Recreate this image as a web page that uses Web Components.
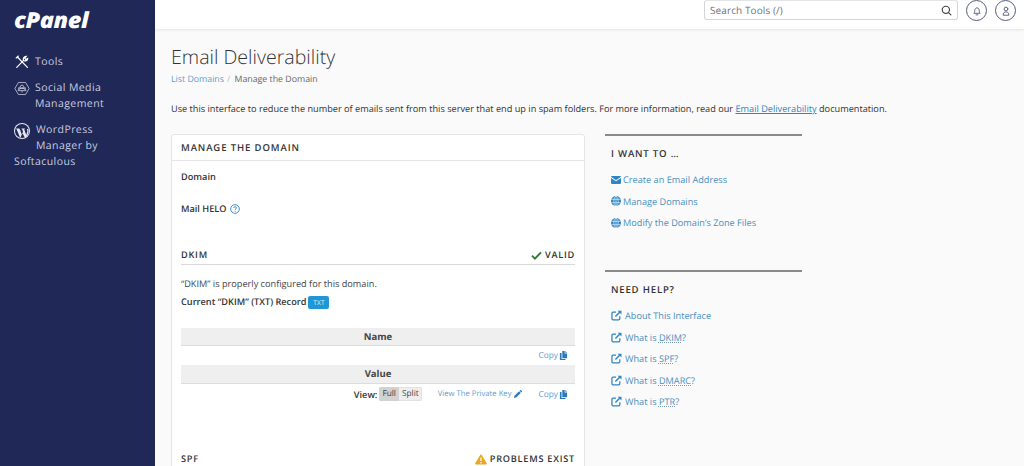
<!DOCTYPE html>
<html lang="en">
<head>
<meta charset="utf-8">
<title>Email Deliverability</title>
<style>
  html, body { margin: 0; height: 466px; overflow: hidden; }
  body { font-family: "Open Sans", "Liberation Sans", sans-serif; color: #333; background: #fafafa; text-rendering: geometricPrecision; }
</style>
</head>
<body>
<cp-app>
  <cp-sidebar slot="side">
    <cp-nav-item icon="tools" label="Tools"></cp-nav-item>
    <cp-nav-item icon="social" label="Social Media Management"></cp-nav-item>
    <cp-nav-item icon="wp" label="WordPress Manager by Softaculous" wrap></cp-nav-item>
  </cp-sidebar>
  <cp-topbar slot="top"></cp-topbar>
  <cp-page>
    <cp-panel title="Manage the Domain">
      <cp-field label="Domain" style="margin-top:-1px"></cp-field>
      <cp-field label="Mail HELO" help></cp-field>
      <cp-section name="DKIM" status="Valid" kind="ok" style="margin-top:23px"></cp-section>
      <cp-dkim></cp-dkim>
      <cp-section name="SPF" status="Problems Exist" kind="warn" style="margin-top:47px"></cp-section>
    </cp-panel>
    <div slot="aside">
      <cp-side-box heading="I Want To …">
        <cp-link icon="mail">Create an Email Address</cp-link>
        <cp-link icon="globe">Manage Domains</cp-link>
        <cp-link icon="globe">Modify the Domain’s Zone Files</cp-link>
      </cp-side-box>
      <cp-side-box heading="Need Help?" style="margin-top:36px">
        <cp-link icon="ext">About This Interface</cp-link>
        <cp-link icon="ext">What is <abbr>DKIM</abbr>?</cp-link>
        <cp-link icon="ext">What is <abbr>SPF</abbr>?</cp-link>
        <cp-link icon="ext">What is <abbr>DMARC</abbr>?</cp-link>
        <cp-link icon="ext">What is <abbr>PTR</abbr>?</cp-link>
      </cp-side-box>
    </div>
  </cp-page>
</cp-app>

<script>
const ICONS = {
  tools: `<svg viewBox="0 0 16 16" width="14" height="14" fill="none" stroke="#fff" stroke-width="1.4" stroke-linecap="round"><path d="M2 14.200 9.800 6.200"/><path d="M9.800 6.200C8.800 4.200 10 1.600 12.800 1.600l-1.700 2 1.200 1.500 2.200-1.200c0 2.600-2.700 3.500-4.700 2.300"/><path d="M3 2.600 14.200 14.200"/><path d="M1.400 3.400 3.800 1.200"/></svg>`,
  social: `<svg viewBox="0 0 18 16" width="17" height="15" fill="none" stroke="#c9cde0" stroke-width=".9"><path d="M5 1.200h8L17 8l-4 6.800H5L1 8z" stroke-linejoin="round"/><circle cx="9" cy="5.800" r="1.700"/><path d="M4.600 10.400c0-1.400 1-2.400 2.400-2.400h4c1.400 0 2.400 1 2.400 2.400z"/><circle cx="6.200" cy="7.800" r="1.100"/><circle cx="11.800" cy="7.800" r="1.100"/><path d="M9 10.400v2"/></svg>`,
  wp: `<svg viewBox="0 0 16 16" width="16" height="16"><circle cx="8" cy="8" r="8" fill="#e6e8f2"/><circle cx="8" cy="8" r="7" fill="#1f2857"/><path d="M2.200 5.600h3.400l-.4.500.7.1 2 5.800 1.100-3.300-.9-2.500-.6-.1V5.600h3.400v.5l-.7.1 2 5.700 1-3c.4-1.500-.1-2.300-.5-3h1.500c.7 2 .3 4-.5 5.600l-2 3.600h-.7L8.300 9.700l-1.600 4.900H6L2.600 6.200l-.4-.1z" fill="#e6e8f2"/></svg>`,
  search: `<svg viewBox="0 0 14 14" width="11" height="11" fill="none" stroke="#444" stroke-width="1.500" stroke-linecap="round"><circle cx="6.200" cy="6.200" r="4.600"/><path d="M9.600 9.600 12.600 12.600"/></svg>`,
  bell: `<svg viewBox="0 0 14 14" width="10" height="10" fill="none" stroke="#555b7c" stroke-width="1.300" stroke-linejoin="round"><path d="M2.600 10.200c.9-.8 1.200-1.600 1.200-3.600 0-2.400 1.400-4 3.200-4s3.200 1.600 3.200 4c0 2 .3 2.800 1.200 3.600z"/><path d="M5.800 12.400h2.400" stroke-linecap="round"/></svg>`,
  user: `<svg viewBox="0 0 14 14" width="10" height="10" fill="none" stroke="#555b7c" stroke-width="1.300" stroke-linecap="round"><circle cx="7" cy="4.200" r="2.600"/><path d="M3 12.400c0-2.600 1.500-4.200 4-4.200s4 1.600 4 4.200z"/></svg>`,
  help: `<svg viewBox="0 0 12 12" width="10" height="10"><circle cx="6" cy="6" r="5.200" fill="none" stroke="#2f86c4" stroke-width="1.100"/><path d="M4.400 4.700c.1-1 .8-1.500 1.700-1.500s1.600.6 1.600 1.400c0 1.200-1.600 1.200-1.600 2.400" fill="none" stroke="#2f86c4" stroke-width="1.100"/><circle cx="6.100" cy="8.700" r=".7" fill="#2f86c4"/></svg>`,
  check: `<svg viewBox="0 0 12 10" width="11" height="9"><path d="M1 5.200 4.200 8.400 11 1.600" fill="none" stroke="#2e7d32" stroke-width="2.100"/></svg>`,
  warn: `<svg viewBox="0 0 14 12" width="12" height="11"><path d="M7 .3c.4 0 .7.2.9.5l5.800 9.600c.4.7-.1 1.400-.9 1.400H1.200c-.8 0-1.300-.7-.9-1.400L6.100.8C6.300.5 6.600.3 7 .3z" fill="#e8a91f"/><path d="M7 3.800v4" stroke="#fff" stroke-width="1.500"/><circle cx="7" cy="9.700" r=".9" fill="#fff"/></svg>`,
  copy: `<svg viewBox="0 0 12 12" width="9" height="9" fill="#2f79b9"><path d="M4.400 0h3.200v3.200h3.200V9.600H4.400z"/><path d="M8.400 0l2.400 2.400H8.400z"/><path d="M1.200 2.600h2.200v8h5.200V12H1.200z"/></svg>`,
  pencil: `<svg viewBox="0 0 12 12" width="8" height="8" fill="#2f79b9"><path d="M0 12l.7-3.300L7.600 1.800l2.600 2.600-6.900 6.900z"/><path d="M8.400 1l.7-.7c.4-.4 1-.4 1.400 0l1.200 1.200c.4.400.4 1 0 1.400l-.7.7z"/></svg>`,
  mail: `<svg viewBox="0 0 14 11" width="10" height="8" fill="#2f86c4"><path d="M1.200 0h11.600c.7 0 1.200.5 1.200 1.100L7 5.800 0 1.100C0 .5.500 0 1.200 0z"/><path d="M0 2.600l7 4.600 7-4.600v7.200c0 .7-.5 1.200-1.200 1.200H1.200C.5 11 0 10.500 0 9.800z"/></svg>`,
  globe: `<svg viewBox="0 0 12 12" width="10" height="10"><circle cx="6" cy="6" r="6" fill="#2f86c4"/><g fill="none" stroke="#fafafa" stroke-width=".7"><ellipse cx="6" cy="6" rx="2.600" ry="5.800"/><path d="M.4 4h11.200M.4 8h11.200M6 0v12"/></g></svg>`,
  ext: `<svg viewBox="0 0 14 14" width="11" height="11" fill="none" stroke="#2f86c4" stroke-width="1.600"><path d="M6.400 2.600H2.600c-.8 0-1.400.6-1.400 1.400v7.200c0 .8.6 1.400 1.400 1.400h7.200c.8 0 1.400-.6 1.400-1.400V8"/><path d="M5.600 8.400 12 2" stroke-width="1.800"/><path d="M8.400 .8h5v5z" fill="#2f86c4" stroke="none"/></svg>`
};

class CpApp extends HTMLElement {
  constructor() {
    super();
    this.attachShadow({ mode: "open" });
    this.shadowRoot.innerHTML = `
      <style>
        :host { display: grid; grid-template-columns: 155px 1fr; grid-template-rows: 29px 1fr; height: 466px; }
        .side { grid-row: 1 / 3; }
      </style>
      <div class="side"><slot name="side"></slot></div>
      <slot name="top"></slot>
      <slot></slot>
    `;
  }
}
customElements.define("cp-app", CpApp);

class CpSidebar extends HTMLElement {
  constructor() {
    super();
    this.attachShadow({ mode: "open" });
    this.shadowRoot.innerHTML = `
      <style>
        :host { display: block; height: 466px; background: #1f2857; color: #c9cde0; box-sizing: border-box; padding-top: 9px; }
        .logo { display: block; width: max-content; margin-left: 14px; height: 24px; font: italic 800 22px/23px "Open Sans", sans-serif; color: #fff; letter-spacing: -.4px; transform: scaleX(1.070); transform-origin: left center; }
        nav { display: flex; flex-direction: column; gap: 10px; margin-top: 21px; }
      </style>
      <span class="logo">cPanel</span>
      <nav><slot></slot></nav>
    `;
  }
}
customElements.define("cp-sidebar", CpSidebar);

class CpNavItem extends HTMLElement {
  constructor() {
    super();
    this.attachShadow({ mode: "open" });
  }

  connectedCallback() {
    const label = this.getAttribute("label");
    // the WordPress entry breaks under its icon, like the real menu does
    const text = this.hasAttribute("wrap")
      ? `WordPress<br>Manager by<br>Softaculous`
      : `<span>${label.replace("Media ", "Media<br>")}</span>`;
    this.shadowRoot.innerHTML = `
      <style>
        :host { display: block; padding-left: 14px; font-size: 10.500px; line-height: 16px; letter-spacing: .42px; color: #c9cde0; }
        .row { display: flex; gap: 5px; }
        .ic { flex: none; width: 16px; display: flex; justify-content: center; padding-top: 1px; }
        .wrap .ic { float: left; margin-right: 6px; height: 30px; }
      </style>
      <div class="${this.hasAttribute("wrap") ? "wrap" : "row"}">
        <span class="ic">${ICONS[this.getAttribute("icon")]}</span>
        ${text}
      </div>
    `;
  }
}
customElements.define("cp-nav-item", CpNavItem);

class CpTopbar extends HTMLElement {
  constructor() {
    super();
    this.attachShadow({ mode: "open" });
    this.shadowRoot.innerHTML = `
      <style>
        :host { display: flex; align-items: flex-start; justify-content: flex-end; gap: 8px; height: 29px; box-sizing: border-box; background: #fff; box-shadow: 0 1px 3px rgba(0,0,0,.09); padding-right: 8px; position: relative; z-index: 1; }
        .search { width: 254px; height: 20px; box-sizing: border-box; border: 1px solid #d3d5d9; border-top-color: #e4e4e6; border-radius: 3px; display: flex; align-items: center; justify-content: space-between; padding: 0 5px; font-size: 10px; color: #70747c; letter-spacing: .1px; }
        .round { width: 21px; height: 21px; box-sizing: border-box; border: 1px solid #555b7c; border-radius: 50%; display: flex; align-items: center; justify-content: center; }
      </style>
      <div class="search"><span>Search Tools (/)</span>${ICONS.search}</div>
      <div class="round">${ICONS.bell}</div>
      <div class="round">${ICONS.user}</div>
    `;
  }
}
customElements.define("cp-topbar", CpTopbar);

class CpPage extends HTMLElement {
  constructor() {
    super();
    this.attachShadow({ mode: "open" });
    this.shadowRoot.innerHTML = `
      <style>
        :host { display: block; padding: 14px 16px 0; font-size: 9.180px; overflow: hidden; }
        h1 { margin: 0; font-size: 19.600px; font-weight: 300; line-height: 28px; color: #333; }
        .crumbs { margin-top: 1px; font-size: 8.800px; line-height: 14px; color: #666; }
        .crumbs a { color: #5a9fcf; }
        .crumbs i { font-style: normal; color: #bbb; margin: 0 2px 0 3px; }
        p { margin: 16px 0 0; line-height: 14px; color: #333; white-space: nowrap; }
        p a { color: #2f86c4; text-decoration: underline; }
        .cols { display: grid; grid-template-columns: 414px 197px; gap: 20px; margin-top: 18px; }
      </style>
      <h1>Email Deliverability</h1>
      <div class="crumbs"><a>List Domains</a><i>/</i> Manage the Domain</div>
      <p>Use this interface to reduce the number of emails sent from this server that end up in spam folders. For more information, read our <a>Email Deliverability</a> documentation.</p>
      <div class="cols">
        <div><slot></slot></div>
        <slot name="aside"></slot>
      </div>
    `;
  }
}
customElements.define("cp-page", CpPage);

class CpPanel extends HTMLElement {
  constructor() {
    super();
    this.attachShadow({ mode: "open" });
  }

  connectedCallback() {
    this.shadowRoot.innerHTML = `
      <style>
        :host { display: block; background: #fff; border: 1px solid #e6e6e6; border-radius: 3px; box-sizing: border-box; height: 400px; }
        header { height: 26px; box-sizing: border-box; padding: 0 9px; border-bottom: 1px solid #e6e6e6; font-size: 9.500px; font-weight: 600; letter-spacing: .9px; line-height: 25px; text-transform: uppercase; color: #333; }
        .body { padding: 0 9px; }
      </style>
      <header>${this.getAttribute("title")}</header>
      <div class="body"><slot></slot></div>
    `;
  }
}
customElements.define("cp-panel", CpPanel);

class CpField extends HTMLElement {
  constructor() {
    super();
    this.attachShadow({ mode: "open" });
  }

  connectedCallback() {
    const help = this.hasAttribute("help") ? ICONS.help : "";
    this.shadowRoot.innerHTML = `
      <style>
        :host { display: flex; align-items: center; gap: 3px; height: 32px; padding-top: 1px; box-sizing: border-box; font-size: 9.200px; font-weight: 600; color: #333; }
        svg { display: block; }
      </style>
      <span>${this.getAttribute("label")}</span>${help}
    `;
  }
}
customElements.define("cp-field", CpField);

class CpSection extends HTMLElement {
  constructor() {
    super();
    this.attachShadow({ mode: "open" });
  }

  connectedCallback() {
    const kind = this.getAttribute("kind");
    this.shadowRoot.innerHTML = `
      <style>
        :host { display: flex; justify-content: space-between; align-items: flex-start; height: 18px; box-sizing: border-box; border-bottom: 1px solid #d9d9d9; font-size: 9.200px; font-weight: 600; letter-spacing: .75px; line-height: 16px; text-transform: uppercase; color: #333; }
        .st { display: flex; align-items: center; gap: 3px; }
        svg { display: block; }
      </style>
      <span>${this.getAttribute("name")}</span>
      <span class="st">${ICONS[kind === "ok" ? "check" : "warn"]}${this.getAttribute("status")}</span>
    `;
  }
}
customElements.define("cp-section", CpSection);

class CpDkim extends HTMLElement {
  constructor() {
    super();
    this.attachShadow({ mode: "open" });
    this.shadowRoot.innerHTML = `
      <style>
        :host { display: block; font-size: 9.180px; color: #333; }
        .ok { margin-top: 12px; line-height: 14px; color: #444; }
        .rec { margin-top: 4px; line-height: 14px; font-weight: 600; display: flex; align-items: center; gap: 2px; }
        .tag { background: #1f97d4; color: #dff1fb; font-size: 6.500px; font-weight: 400; width: 21px; height: 13px; line-height: 13px; text-align: center; border-radius: 2px; letter-spacing: .2px; }
        .th { height: 18px; background: #efefef; border-bottom: 1px solid #ddd; box-sizing: border-box; text-align: center; font-weight: 700; line-height: 17px; font-size: 9.500px; color: #444; }
        .th.value { height: 19px; line-height: 18px; }
        .name { margin-top: 19px; }
        .line { display: flex; justify-content: flex-end; align-items: center; height: 19px; padding-right: 7px; font-size: 8.300px; color: #5f9ccb; }
        .line.tools { height: 20px; }
        .line a { display: flex; align-items: center; gap: 0; }
        .line svg { display: block; }
        .copy svg { margin-left: 1px; }
        .view { font-size: 9.180px; font-weight: 600; color: #333; margin-right: 2px; }
        .seg { display: flex; margin-right: 16px; border-radius: 2px; overflow: hidden; font-size: 8.300px; color: #444; background: #eee; box-shadow: inset 0 0 0 1px #e2e2e2; }
        .seg span { height: 14px; line-height: 14px; padding: 0 3px; }
        .seg .on { background: #d2d2d2; }
        .key { margin-right: 17px; font-size: 7.700px; gap: 2px !important; }
      </style>
      <div class="ok">“DKIM” is properly configured for this domain.</div>
      <div class="rec">Current “DKIM” (TXT) Record <span class="tag">TXT</span></div>
      <div class="th name">Name</div>
      <div class="line"><a class="copy">Copy ${ICONS.copy}</a></div>
      <div class="th value">Value</div>
      <div class="line tools">
        <span class="view">View:</span>
        <span class="seg"><span class="on">Full</span><span>Split</span></span>
        <a class="key">View The Private Key ${ICONS.pencil}</a>
        <a class="copy">Copy ${ICONS.copy}</a>
      </div>
    `;
  }
}
customElements.define("cp-dkim", CpDkim);

class CpSideBox extends HTMLElement {
  constructor() {
    super();
    this.attachShadow({ mode: "open" });
  }

  connectedCallback() {
    this.shadowRoot.innerHTML = `
      <style>
        :host { display: block; border-top: 2px solid #8a8a8a; padding: 0 6px; }
        h2 { margin: 11px 0 8px; font-size: 9.600px; line-height: 14px; font-weight: 600; letter-spacing: .8px; text-transform: uppercase; color: #333; }
      </style>
      <h2>${this.getAttribute("heading")}</h2>
      <slot></slot>
    `;
  }
}
customElements.define("cp-side-box", CpSideBox);

class CpLink extends HTMLElement {
  constructor() {
    super();
    this.attachShadow({ mode: "open" });
  }

  connectedCallback() {
    const wide = this.getAttribute("icon") === "ext";
    this.shadowRoot.innerHTML = `
      <style>
        :host { display: flex; align-items: center; height: 21.600px; font-size: 9.180px; color: #4a8fc0; }
        .ic { display: flex; width: ${wide ? 14 : 12}px; flex: none; }
        ::slotted(abbr) { text-decoration: underline dotted #7a9fbb; text-underline-offset: 1px; }
      </style>
      <span class="ic">${ICONS[this.getAttribute("icon")]}</span>
      <span><slot></slot></span>
    `;
  }
}
customElements.define("cp-link", CpLink);
</script>
</body>
</html>
